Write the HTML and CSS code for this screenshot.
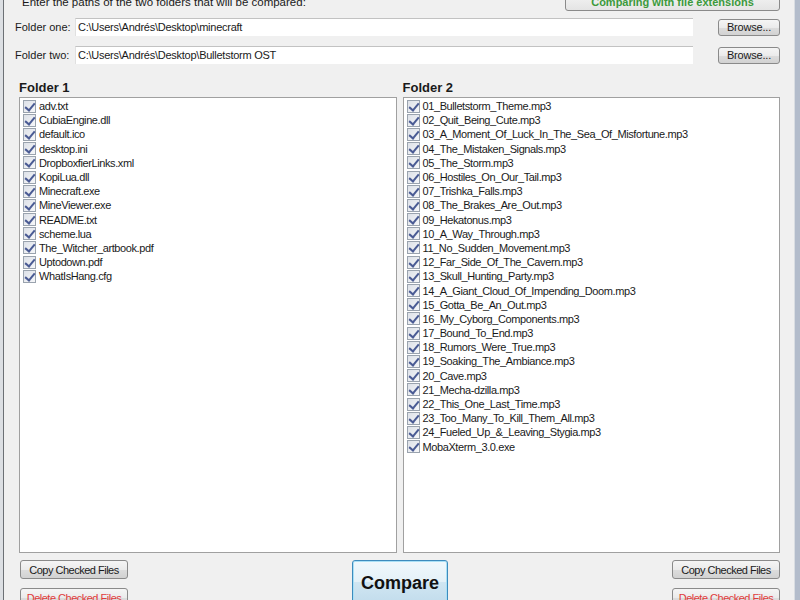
FILE: index.html
```html
<!DOCTYPE html>
<html>
<head>
<meta charset="utf-8">
<link rel="stylesheet" href="styles.css">
</head>
<body>
<div class="window">
  <div class="client">
    <div class="row-top">
      <span class="hint">Enter the paths of the two folders that will be compared:</span>
      <button class="btn mode">Comparing with file extensions</button>
    </div>
    <div class="path-row">
      <span class="label">Folder one:</span>
      <div class="input">C:\Users\Andrés\Desktop\minecraft</div>
      <button class="btn browse">Browse...</button>
    </div>
    <div class="path-row">
      <span class="label">Folder two:</span>
      <div class="input">C:\Users\Andrés\Desktop\Bulletstorm OST</div>
      <button class="btn browse">Browse...</button>
    </div>
    <div class="panes">
      <div class="pane">
        <div class="pane-title">Folder 1</div>
        <ul class="list">
          <li><span class="cb"></span>adv.txt</li>
          <li><span class="cb"></span>CubiaEngine.dll</li>
          <li><span class="cb"></span>default.ico</li>
          <li><span class="cb"></span>desktop.ini</li>
          <li><span class="cb"></span>DropboxfierLinks.xml</li>
          <li><span class="cb"></span>KopiLua.dll</li>
          <li><span class="cb"></span>Minecraft.exe</li>
          <li><span class="cb"></span>MineViewer.exe</li>
          <li><span class="cb"></span>README.txt</li>
          <li><span class="cb"></span>scheme.lua</li>
          <li><span class="cb"></span>The_Witcher_artbook.pdf</li>
          <li><span class="cb"></span>Uptodown.pdf</li>
          <li><span class="cb"></span>WhatIsHang.cfg</li>
        </ul>
      </div>
      <div class="pane">
        <div class="pane-title">Folder 2</div>
        <ul class="list">
          <li><span class="cb"></span>01_Bulletstorm_Theme.mp3</li>
          <li><span class="cb"></span>02_Quit_Being_Cute.mp3</li>
          <li><span class="cb"></span>03_A_Moment_Of_Luck_In_The_Sea_Of_Misfortune.mp3</li>
          <li><span class="cb"></span>04_The_Mistaken_Signals.mp3</li>
          <li><span class="cb"></span>05_The_Storm.mp3</li>
          <li><span class="cb"></span>06_Hostiles_On_Our_Tail.mp3</li>
          <li><span class="cb"></span>07_Trishka_Falls.mp3</li>
          <li><span class="cb"></span>08_The_Brakes_Are_Out.mp3</li>
          <li><span class="cb"></span>09_Hekatonus.mp3</li>
          <li><span class="cb"></span>10_A_Way_Through.mp3</li>
          <li><span class="cb"></span>11_No_Sudden_Movement.mp3</li>
          <li><span class="cb"></span>12_Far_Side_Of_The_Cavern.mp3</li>
          <li><span class="cb"></span>13_Skull_Hunting_Party.mp3</li>
          <li><span class="cb"></span>14_A_Giant_Cloud_Of_Impending_Doom.mp3</li>
          <li><span class="cb"></span>15_Gotta_Be_An_Out.mp3</li>
          <li><span class="cb"></span>16_My_Cyborg_Components.mp3</li>
          <li><span class="cb"></span>17_Bound_To_End.mp3</li>
          <li><span class="cb"></span>18_Rumors_Were_True.mp3</li>
          <li><span class="cb"></span>19_Soaking_The_Ambiance.mp3</li>
          <li><span class="cb"></span>20_Cave.mp3</li>
          <li><span class="cb"></span>21_Mecha-dzilla.mp3</li>
          <li><span class="cb"></span>22_This_One_Last_Time.mp3</li>
          <li><span class="cb"></span>23_Too_Many_To_Kill_Them_All.mp3</li>
          <li><span class="cb"></span>24_Fueled_Up_&amp;_Leaving_Stygia.mp3</li>
          <li><span class="cb"></span>MobaXterm_3.0.exe</li>
        </ul>
      </div>
    </div>
    <div class="bottom">
      <div class="actions">
        <button class="btn action">Copy Checked Files</button>
        <button class="btn action danger">Delete Checked Files</button>
      </div>
      <button class="btn compare">Compare</button>
      <div class="actions right">
        <button class="btn action">Copy Checked Files</button>
        <button class="btn action danger">Delete Checked Files</button>
      </div>
    </div>
  </div>
</div>
</body>
</html>
```

FILE: styles.css
```css
* { box-sizing: border-box; }
html, body { margin: 0; padding: 0; height: 600px; overflow: hidden; }
body {
  background: #f0f0f0;
  font-family: "Liberation Sans", Arial, sans-serif;
  font-size: 11px;
  color: #1a1a1a;
}
.window {
  height: 600px;
  border-left: 3px solid #dcdfe3;
  border-right: 5px solid #b3bccb;
  background: #f0f0f0;
}
.client {
  height: 100%;
  border-left: 1px solid #6c7075;
  border-right: 1px solid #d9dde2;
  padding: 0 14px 0 15px;
  display: flex;
  flex-direction: column;
}
.btn {
  font-family: "Liberation Sans", Arial, sans-serif;
  font-size: 11px;
  color: #1a1a1a;
  border: 1px solid #8a8a8a;
  border-radius: 3px;
  background: linear-gradient(#f5f5f5 0%, #ebebeb 50%, #dddddd 51%, #d2d2d2 100%);
  padding: 0;
  margin: 0;
}
.row-top {
  display: flex;
  align-items: flex-end;
  justify-content: space-between;
  margin-top: -7px;
  height: 18px;
}
.hint { padding-left: 3px; padding-bottom: 2px; line-height: 13px; font-size: 11.5px; }
.mode {
  width: 215px;
  height: 18px;
  color: #3c9a3c;
  font-weight: bold;
  font-size: 11px;
  padding-top: 1px;
  line-height: 11px;
  background: linear-gradient(#f4f4f4, #e4e4e4);
}
.path-row {
  display: flex;
  align-items: center;
  margin-top: 7px;
  margin-left: -4px;
  height: 18px;
}
.path-row + .path-row { margin-top: 10px; }
.label { width: 60px; flex: none; line-height: 12px; }
.input {
  width: 618px;
  height: 18px;
  background: #fff;
  border-top: 1px solid #c2c2c2;
  border-left: 1px solid #e0e0e0;
  padding: 2px 0 0 2px;
  line-height: 13px;
  letter-spacing: -0.25px;
}
.browse {
  margin-left: auto;
  width: 62px;
  height: 17px;
  letter-spacing: -0.2px;
}
.panes {
  display: flex;
  gap: 6px;
  margin-top: 16px;
}
.pane { flex: 1; display: flex; flex-direction: column; }
.pane-title {
  font-weight: bold;
  font-size: 13px;
  line-height: 16px;
  height: 17px;
}
.list {
  list-style: none;
  margin: 0;
  height: 456px;
  background: #fff;
  border: 1px solid #a0a0a0;
  padding: 1px 0 0 3px;
}
.list li {
  height: 14.2px;
  line-height: 14px;
  display: flex;
  align-items: center;
  white-space: nowrap;
  letter-spacing: -0.4px;
}
.cb {
  width: 13px;
  height: 13px;
  border: 1px solid #9aa3ae;
  background: linear-gradient(135deg, #dde1e8, #f6f7f9);
  margin-right: 3px;
  position: relative;
  flex: none;
}
.cb::after {
  content: "";
  position: absolute;
  left: 3px;
  top: 0px;
  width: 4px;
  height: 8px;
  border-right: 2px solid #4a5b94;
  border-bottom: 2px solid #4a5b94;
  transform: rotate(40deg);
}
.bottom {
  display: flex;
  justify-content: space-between;
  align-items: flex-start;
  margin-top: 7px;
}
.actions { display: flex; flex-direction: column; gap: 9px; padding-left: 1px; }
.actions.right { padding-left: 0; }
.action { width: 108px; height: 19px; letter-spacing: -0.5px; }
.danger { color: #e03b3b; }
.compare {
  width: 96px;
  height: 44px;
  font-size: 18px;
  font-weight: bold;
  color: #111;
  border: 1px solid #3d8bbd;
  box-shadow: inset 0 0 0 1px #a9e0f6;
  background: linear-gradient(#f0f8fc 0%, #e4f1f8 50%, #d0e6f2 51%, #c2dcec 100%);
  padding-top: 2px;
}
```
